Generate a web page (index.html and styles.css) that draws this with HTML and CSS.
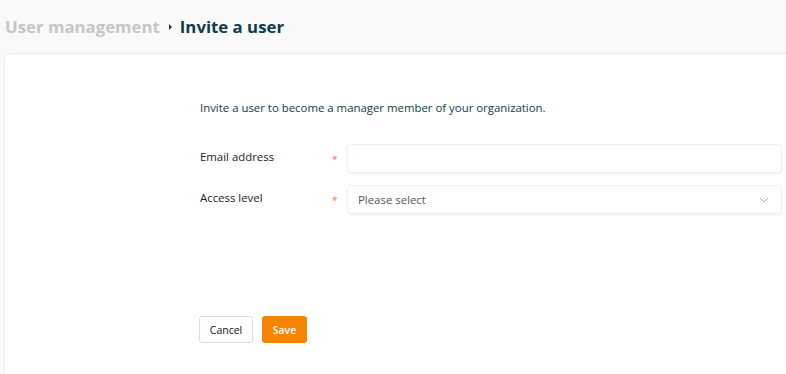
FILE: index.html
```html
<!DOCTYPE html>
<html lang="en">
<head>
    <meta charset="UTF-8">
    <meta name="viewport" content="width=device-width, initial-scale=1.0">
    <title>Invite a user</title>
    <link rel="stylesheet" href="styles.css">
</head>
<body>
    <div class="breadcrumb">
        <span class="crumb-parent">User management</span>
        <span class="crumb-sep"></span>
        <span class="crumb-current">Invite a user</span>
    </div>

    <div class="card">
        <p class="intro">Invite a user to become a manager member of your organization.</p>

        <div class="form-row">
            <label for="email">Email address</label>
            <span class="required">*</span>
            <input type="text" id="email" class="field">
        </div>
        <div class="form-row">
            <label for="access">Access level</label>
            <span class="required">*</span>
            <div class="field select" id="access">
                <span class="placeholder">Please select</span>
                <svg class="chevron" width="10" height="6" viewBox="0 0 10 6">
                    <path d="M1 1 L5 5 L9 1" fill="none" stroke="#b0b0b0" stroke-width="1"/>
                </svg>
            </div>
        </div>

        <div class="actions">
            <button class="btn btn-cancel">Cancel</button>
            <button class="btn btn-save">Save</button>
        </div>
    </div>
</body>
</html>
```

FILE: styles.css
```css
body {
    font-family: "Open Sans", "Noto Sans", Arial, sans-serif;
    margin: 0;
    background-color: #f9f9f9;
    height: 374px;
    overflow: hidden;
}
.breadcrumb {
    display: flex;
    align-items: center;
    height: 53px;
    padding-left: 5px;
    font-size: 16.8px;
    font-weight: 700;
}
.crumb-parent {
    color: #c6c6c6;
}
.crumb-sep {
    width: 0;
    height: 0;
    border-top: 3px solid transparent;
    border-bottom: 3px solid transparent;
    border-left: 3px solid #0d3c4a;
    margin: 0 8px 0 9px;
}
.crumb-current {
    color: #0d3c4a;
}
.card {
    box-sizing: border-box;
    margin-left: 4px;
    height: 321px;
    background-color: white;
    border: 1px solid #ececec;
    border-right: none;
    border-bottom: none;
    border-radius: 6px 0 0 0;
    padding: 46px 0 0 194px;
    font-size: 11.4px;
}
.intro {
    margin: 0 0 30px 1px;
    color: #0d3c4a;
}
.form-row {
    display: grid;
    grid-template-columns: 133px 16px 433px;
    align-items: center;
    margin-bottom: 14px;
    color: #1a1a1a;
}
.form-row label {
    margin: -4px 0 0 1px;
}
.required {
    color: #f27a5a;
    font-size: 10px;
}
.field {
    box-sizing: border-box;
    height: 27px;
    border: none;
    border-radius: 3px;
    background: white;
    box-shadow: 0 0 0 1px #f0f0f0, 0 1px 3px rgba(0, 0, 0, 0.12);
    font: inherit;
    padding: 0 10px;
}
.select {
    display: flex;
    align-items: center;
    justify-content: space-between;
}
.placeholder {
    color: #555;
}
.chevron {
    margin-right: 2px;
}
.actions {
    display: flex;
    gap: 9px;
    margin-top: 103px;
}
.btn {
    height: 27px;
    border-radius: 3px;
    font: inherit;
    font-size: 10.5px;
    cursor: pointer;
}
.btn-cancel {
    width: 54px;
    background: white;
    border: 1px solid #dcdcdc;
    color: #111;
}
.btn-save {
    width: 45px;
    background-color: #f58400;
    border: none;
    color: white;
    font-weight: 600;
}
```
